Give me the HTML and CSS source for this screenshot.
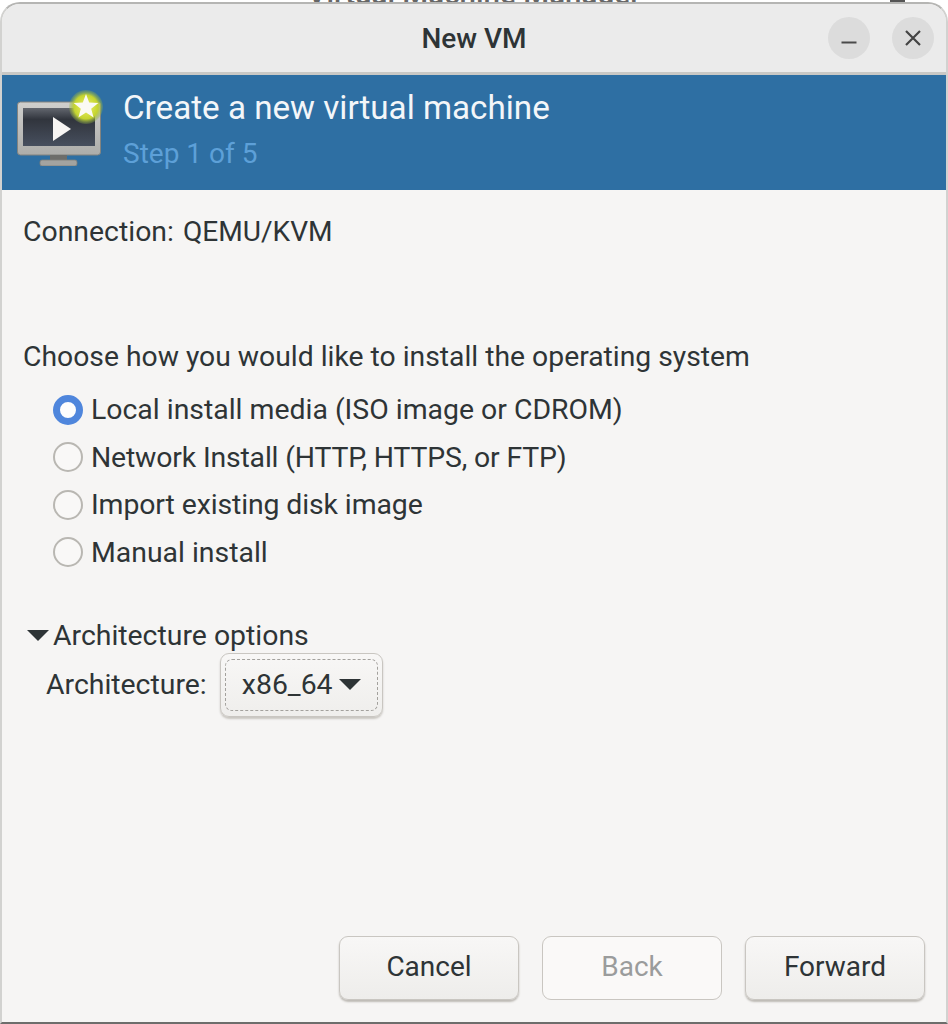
FILE: index.html
```html
<!DOCTYPE html>
<html lang="en">
<head>
<meta charset="utf-8">
<title>New VM</title>
<link rel="stylesheet" href="styles.css">
</head>
<body>
<div class="backdrop"><span class="backdrop-title">Virtual Machine Manager</span><span class="backdrop-btn"></span></div>
<main class="window">
  <header class="titlebar">
    <h1 class="title">New VM</h1>
    <div class="wm-buttons">
      <button class="wm-btn" aria-label="Minimize"><svg width="20" height="20" viewBox="0 0 20 20"><path d="M2.5 14.5h15" stroke="#4a4a4a" stroke-width="2.2"/></svg></button>
      <button class="wm-btn" aria-label="Close"><svg width="20" height="20" viewBox="0 0 20 20"><path d="M3 3l14 14M17 3L3 17" stroke="#444" stroke-width="2.2" fill="none"/></svg></button>
    </div>
  </header>
  <section class="banner">
    <svg class="banner-icon" width="88" height="76" viewBox="0 0 88 76">
      <defs>
        <linearGradient id="screen" x1="0" y1="0" x2="0" y2="1"><stop offset="0" stop-color="#62666e"/><stop offset=".3" stop-color="#31353d"/><stop offset="1" stop-color="#474f5e"/></linearGradient>
        <linearGradient id="bezel" x1="0" y1="0" x2="0" y2="1"><stop offset="0" stop-color="#cfcfcd"/><stop offset="1" stop-color="#adadaa"/></linearGradient>
        <radialGradient id="glow"><stop offset="0" stop-color="#f0f26a"/><stop offset=".7" stop-color="#c4d430"/><stop offset="1" stop-color="#8fb04a" stop-opacity=".25"/></radialGradient>
      </defs>
      <rect x="0.5" y="12" width="83" height="53" rx="3" fill="url(#bezel)" stroke="#83837f"/>
      <rect x="6" y="18" width="72" height="38" fill="url(#screen)"/>
      <rect x="33" y="65" width="17" height="5" fill="#6d6d6a"/>
      <rect x="23" y="70" width="37" height="6" rx="2" fill="#a3a3a0" stroke="#7d7d7a" stroke-width=".8"/>
      <path d="M36 27l18 12-18 12z" fill="#f7f5f3"/>
      <circle cx="69" cy="17" r="17" fill="url(#glow)"/>
      <path d="M69 4l3.2 8.6 9.2.4-7.2 5.7 2.4 8.8-7.6-5-7.6 5 2.4-8.8-7.2-5.7 9.2-.4z" fill="#fbfaf3"/>
    </svg>
    <div class="banner-text">
      <div class="banner-title">Create a new virtual machine</div>
      <div class="banner-step">Step 1 of 5</div>
    </div>
  </section>
  <section class="content">
    <div class="connection"><span>Connection:</span><span class="connection-value">QEMU/KVM</span></div>
    <div class="prompt">Choose how you would like to install the operating system</div>
    <ul class="radios">
      <li class="radio-row"><span class="radio checked"></span>Local install media (ISO image or CDROM)</li>
      <li class="radio-row narrow"><span class="radio"></span>Network Install (HTTP, HTTPS, or FTP)</li>
      <li class="radio-row slight"><span class="radio"></span>Import existing disk image</li>
      <li class="radio-row"><span class="radio"></span>Manual install</li>
    </ul>
    <div class="expander"><span class="arrow"></span>Architecture options</div>
    <div class="arch-row">
      <span>Architecture:</span>
      <div class="combo"><div class="combo-focus">x86_64<span class="arrow small"></span></div></div>
    </div>
  </section>
  <footer class="actions">
    <button class="btn">Cancel</button>
    <button class="btn disabled">Back</button>
    <button class="btn">Forward</button>
  </footer>
</main>
</body>
</html>
```
FILE: styles.css
```css
* { box-sizing: border-box; }
html, body { margin: 0; height: 1024px; overflow: hidden; }
body {
  position: relative;
  background: #fff;
  font-family: Roboto, "Liberation Sans", sans-serif;
  font-size: 28.4px;
  color: #2e3436;
  padding-top: 2px;
}
.backdrop {
  position: absolute;
  top: 0; left: 0; right: 0;
  height: 3px;
  overflow: hidden;
  display: flex;
  justify-content: center;
}
.backdrop-title { font-size: 29.6px; font-weight: 500; line-height: 28px; margin-top: -20px; color: #666; }
.backdrop-btn { position: absolute; left: 890px; top: 0; width: 15px; height: 3px; background: #555; }
.window {
  position: relative;
  width: 948px;
  height: 1022px;
  display: flex;
  flex-direction: column;
  background: #f6f5f4;
  border-radius: 20px 20px 0 0;
  border-top: 2px solid #b5b5b3;
  border-bottom: 2px solid #6d6d6b;
  border-left: 2px solid #d2d2d0;
  border-right: 2px solid #d2d2d0;
  overflow: hidden;
}
.titlebar {
  height: 71px;
  flex: none;
  background: #ebebeb;
  border-bottom: 3px solid #c9c8c5;
  display: flex;
  align-items: center;
  justify-content: center;
  position: relative;
}
.title { margin: 0; font-size: 28px; font-weight: 500; color: #2e3436; }
.wm-buttons {
  position: absolute;
  right: 12px;
  top: 13px;
  display: flex;
  gap: 22px;
}
.wm-btn {
  width: 42px; height: 42px;
  border: 0; padding: 0;
  border-radius: 50%;
  background: #dcdcdc;
  display: flex; align-items: center; justify-content: center;
}
.banner {
  height: 115px;
  flex: none;
  background: #2e6fa3;
  display: flex;
  align-items: center;
  padding-left: 15px;
  gap: 18px;
}
.banner-icon { flex: none; margin-top: -9px; }
.banner-text { display: flex; flex-direction: column; gap: 11px; padding-bottom: 6px; }
.banner-title { font-size: 33.2px; line-height: 38px; color: #f3f6f9; }
.banner-step { font-size: 28px; line-height: 32px; color: #5da0d8; }
.content { flex: 1; padding: 26px 21px 0; display: flex; flex-direction: column; }
.connection { display: flex; gap: 9px; line-height: 32px; }
.connection-value { font-size: 28.1px; }
.prompt { margin-top: 93px; line-height: 32px; font-size: 28.3px; }
.radios { list-style: none; margin: 20.5px 0 0; padding: 0 0 0 30px; display: flex; flex-direction: column; gap: 15.5px; }
.radio-row { display: flex; align-items: center; gap: 8px; height: 32px; }
.radio-row.narrow { letter-spacing: -0.16px; }
.radio-row.slight { letter-spacing: -0.1px; }
.radio {
  width: 30px; height: 30px;
  border-radius: 50%;
  background: #f9f8f7;
  border: 2px solid #b9b7b2;
  flex: none;
}
.radio.checked { background: #fdfdfd; border: 7px solid #4f86dc; }
.expander { display: flex; align-items: center; gap: 4px; margin-top: 51.5px; line-height: 32px; padding-left: 4px; }
.arrow {
  width: 0; height: 0;
  border-left: 11px solid transparent;
  border-right: 11px solid transparent;
  border-top: 11px solid #2e3436;
  flex: none;
}
.arrow.small { margin-left: 6px; }
.arch-row { display: flex; align-items: center; gap: 13px; padding-left: 23px; height: 62px; margin-top: 2px; }
.combo {
  width: 163px; height: 64px;
  padding: 5px 4px;
  border-radius: 9px;
  background: linear-gradient(#f8f7f6, #efeeec);
  border: 1px solid #c9c6c1;
  box-shadow: 0 2px 2px #c9c6c1;
}
.combo-focus {
  height: 100%;
  border: 1px dashed #a3a19d;
  border-radius: 7px;
  display: flex; align-items: center; justify-content: center;
}
.actions {
  flex: none;
  display: flex;
  justify-content: flex-end;
  gap: 23px;
  padding: 0 21px 22px 0;
}
.btn {
  width: 180px; height: 64px;
  font: inherit;
  font-size: 28px;
  padding: 0 0 3px;
  color: #2e3436;
  border-radius: 9px;
  border: 1.5px solid #c9c6c1;
  background: linear-gradient(#f8f7f6, #eeedeb);
  box-shadow: 0 2px 2px #bdbab5;
}
.btn.disabled { color: #9a9c9c; background: #faf9f8; box-shadow: none; }
```
